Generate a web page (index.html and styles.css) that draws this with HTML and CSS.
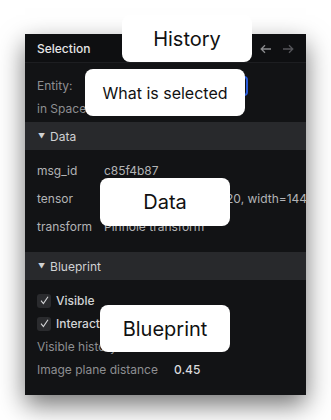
FILE: index.html
```html
<!DOCTYPE html>
<html lang="en">
<head>
    <meta charset="UTF-8">
    <title>Selection panel</title>
    <link rel="stylesheet" href="styles.css">
</head>
<body>
    <div class="stage">
        <div class="panel">
            <div class="panel-head">
                <span class="title">Selection</span>
                <span class="nav">
                    <svg width="12" height="10" viewBox="0 0 12 10"><path d="M11 5H1.5M5 1.2L1.2 5 5 8.8" fill="none" stroke="#8b8c8f" stroke-width="1.3"/></svg>
                    <svg width="12" height="10" viewBox="0 0 12 10"><path d="M1 5h9.5M7 1.2L10.8 5 7 8.8" fill="none" stroke="#55565a" stroke-width="1.3"/></svg>
                </span>
            </div>
            <div class="block top">
                <div class="line dim">Entity:<span class="chip"></span></div>
                <div class="line dim">in Space</div>
            </div>
            <div class="sec-head"><span class="tri">▼</span>Data</div>
            <div class="block data">
                <div class="kv"><span class="k">msg_id</span><span class="v">c85f4b87</span></div>
                <div class="kv"><span class="k">tensor</span><span class="v">U16 Tensor [height=320, width=1440]</span></div>
                <div class="kv"><span class="k">transform</span><span class="v">Pinhole transform</span></div>
            </div>
            <div class="sec-head"><span class="tri">▼</span>Blueprint</div>
            <div class="block bp">
                <div class="line"><span class="check">
                    <svg width="11" height="11" viewBox="0 0 11 11"><path d="M2 5.6l2.4 3L9 1.8" fill="none" stroke="#d4d5d7" stroke-width="1.1"/></svg>
                </span>Visible</div>
                <div class="line"><span class="check">
                    <svg width="11" height="11" viewBox="0 0 11 11"><path d="M2 5.6l2.4 3L9 1.8" fill="none" stroke="#d4d5d7" stroke-width="1.1"/></svg>
                </span>Interactive</div>
                <div class="line dim">Visible history</div>
                <div class="line"><span class="dim wide">Image plane distance</span><span class="num">0.45</span></div>
            </div>
        </div>

        <div class="callout c-history">History</div>
        <div class="callout c-selected">What is selected</div>
        <div class="callout c-data">Data</div>
        <div class="callout c-blueprint">Blueprint</div>
    </div>
</body>
</html>
```

FILE: styles.css
```css
body {
    margin: 0;
    background: #ffffff;
    font-family: Inter, "Noto Sans", sans-serif;
}
.stage {
    position: relative;
    width: 331px;
    height: 420px;
    padding: 34px 0 0 25px;
    box-sizing: border-box;
}
.panel {
    width: 281px;
    height: 361px;
    background: #121315;
    overflow: hidden;
    box-shadow: 0 10px 24px rgba(0, 0, 0, 0.55);
    font-size: 12px;
    color: #c8c9cb;
}
.panel-head {
    height: 28px;
    display: flex;
    align-items: center;
    justify-content: space-between;
    padding: 0 12px 0 12px;
    background: #0e0f11;
    border-bottom: 1px solid #1d1e21;
}
.title {
    color: #e6e6e7;
    font-weight: 500;
}
.nav {
    display: flex;
    gap: 10px;
    margin-top: 1px;
}
.block {
    padding: 0 12px;
}
.top {
    padding-top: 11px;
    height: 48px;
}
.line {
    height: 23px;
    display: flex;
    align-items: center;
    white-space: nowrap;
}
.dim {
    color: #8e8f92;
}
.chip {
    display: inline-block;
    width: 93px;
    height: 16px;
    margin-left: 78px;
    flex-shrink: 0;
    border: 2px solid #2a5bd7;
    border-radius: 4px;
}
.sec-head {
    height: 28px;
    display: flex;
    align-items: center;
    padding-left: 13px;
    background: #28292c;
    color: #d0d1d3;
}
.tri {
    font-size: 7px;
    margin-right: 5px;
}
.data {
    padding-top: 6px;
    height: 102px;
    box-sizing: border-box;
}
.kv {
    height: 28px;
    display: flex;
    align-items: center;
    white-space: nowrap;
}
.k {
    width: 67px;
    flex-shrink: 0;
    color: #b3b4b6;
}
.v {
    color: #b3b4b6;
}
.bp {
    padding-top: 9px;
}
.bp .line:nth-child(-n+2) {
    font-weight: 500;
    color: #d2d3d5;
}
.check {
    width: 14px;
    height: 14px;
    border-radius: 3px;
    background: #2a2b2e;
    display: inline-flex;
    align-items: center;
    justify-content: center;
    margin-right: 5px;
}
.wide {
    width: 137px;
}
.num {
    color: #d9dadc;
    font-weight: 500;
}
.callout {
    position: absolute;
    background: #ffffff;
    border-radius: 8px;
    color: #111111;
    display: flex;
    align-items: center;
    justify-content: center;
    font-size: 20px;
}
.c-history {
    left: 122px;
    top: 15px;
    width: 130px;
    height: 47px;
}
.c-selected {
    left: 85px;
    top: 69px;
    width: 160px;
    height: 47px;
    font-size: 16px;
}
.c-data {
    left: 100px;
    top: 178px;
    width: 130px;
    height: 48px;
}
.c-blueprint {
    left: 100px;
    top: 305px;
    width: 130px;
    height: 47px;
}
```
